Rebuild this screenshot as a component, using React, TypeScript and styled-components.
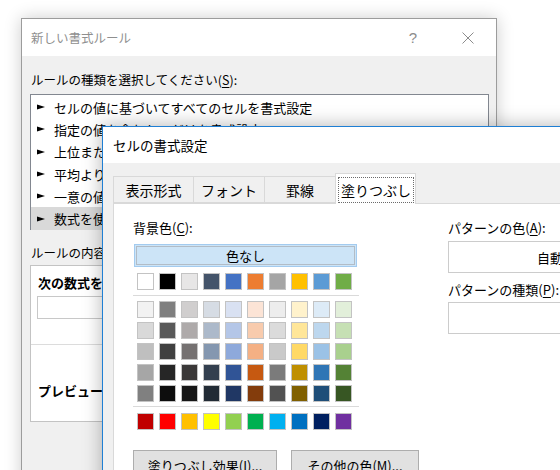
import React from "react";
import styled, { createGlobalStyle } from "styled-components";

const GlobalStyle = createGlobalStyle`
  html, body { margin: 0; padding: 0; background: #ffffff; }
  body { font-family: "Noto Sans CJK JP", "Noto Sans", sans-serif; color: #000; }
  * { box-sizing: border-box; }
`;

const Desktop = styled.div`
  position: relative;
  width: 560px;
  height: 470px;
  overflow: hidden;
  background: #ffffff;
`;

/* ---------- Back dialog: 新しい書式ルール ---------- */

const BackWindow = styled.section`
  position: absolute;
  left: 21px;
  top: 18px;
  width: 476px;
  height: 520px;
  border: 1px solid #9c9c9c;
  background: #f0f0f0;
  box-shadow: 0 0 16px rgba(0, 0, 0, 0.2);
  display: flex;
  flex-direction: column;
`;

const TitleBar = styled.header<{ $h: number; $pl: number }>`
  flex-shrink: 0;
  height: ${(p) => p.$h}px;
  padding-left: ${(p) => p.$pl}px;
  background: #ffffff;
  display: flex;
  align-items: center;
`;

const TitleText = styled.span<{ $size: number; $color: string }>`
  flex: 1;
  font-size: ${(p) => p.$size}px;
  line-height: 18px;
  color: ${(p) => p.$color};
  white-space: nowrap;
`;

const CaptionButton = styled.div<{ $w: number }>`
  width: ${(p) => p.$w}px;
  height: 100%;
  display: flex;
  align-items: center;
  justify-content: center;
  color: #8c8c8c;
  font-family: "Liberation Sans", "DejaVu Sans", sans-serif;
  font-size: 15px;
`;

const BackBody = styled.div`
  padding: 15px 7px 0 8px;
  display: flex;
  flex-direction: column;
`;

const FieldLabel = styled.div<{ $mt?: number; $size?: number; $bold?: boolean }>`
  margin-top: ${(p) => p.$mt ?? 0}px;
  padding-left: 1px;
  font-size: ${(p) => p.$size ?? 12.5}px;
  font-weight: ${(p) => (p.$bold ? 700 : 400)};
  line-height: 18px;
  white-space: nowrap;
  u { text-decoration: underline; text-underline-offset: 2px; }
`;

const RuleList = styled.ul`
  list-style: none;
  margin: 5px 0 0 0;
  padding: 1px 0;
  width: 459px;
  height: 136px;
  border: 1px solid #828790;
  background: #ffffff;
`;

const RuleItem = styled.li<{ $selected?: boolean }>`
  height: 22.3px;
  display: flex;
  align-items: center;
  gap: 9px;
  padding-left: 6px;
  font-size: 13px;
  white-space: nowrap;
  background: ${(p) => (p.$selected ? "#d9d9d9" : "transparent")};
`;

const RuleBox = styled.div`
  margin-top: 3px;
  width: 459px;
  height: 157px;
  border: 1px solid #c3c3c3;
  background: #ffffff;
  display: flex;
  flex-direction: column;
`;

const RuleBoxSection = styled.div<{ $h: number; $pt: number }>`
  height: ${(p) => p.$h}px;
  padding: ${(p) => p.$pt}px 0 0 6px;
  & + & { border-top: 1px solid #dcdcdc; }
`;

const FormulaInput = styled.div`
  margin-top: 4px;
  width: 440px;
  height: 23px;
  border: 1px solid #c8c8c8;
  background: #ffffff;
`;

/* ---------- Front dialog: セルの書式設定 ---------- */

const FrontWindow = styled.section`
  position: absolute;
  left: 102px;
  top: 126px;
  width: 520px;
  height: 400px;
  border: 1px solid #1f7fd4;
  background: #f0f0f0;
  box-shadow: 0 0 18px rgba(0, 0, 0, 0.3);
  display: flex;
  flex-direction: column;
`;

const FrontBody = styled.div`
  flex: 1;
  padding: 10px 0 0 10px;
  display: flex;
  flex-direction: column;
`;

const TabStrip = styled.div`
  height: 30px;
  display: flex;
  align-items: flex-end;
  position: relative;
  z-index: 1;
`;

const Tab = styled.div<{ $w: number; $active?: boolean }>`
  width: ${(p) => p.$w}px;
  height: ${(p) => (p.$active ? 31 : 27)}px;
  margin-bottom: ${(p) => (p.$active ? -1 : 0)}px;
  margin-left: -1px;
  border: 1px solid #d9d9d9;
  border-bottom: ${(p) => (p.$active ? "none" : "1px solid #d9d9d9")};
  background: ${(p) => (p.$active ? "#ffffff" : "#f0f0f0")};
  padding: ${(p) => (p.$active ? "3px 1px 1px 2px" : "0")};
  display: flex;
  align-items: stretch;
  justify-content: center;
  font-size: 14px;
  white-space: nowrap;
  &:first-child { margin-left: 0; }
`;

const TabLabel = styled.span<{ $focus?: boolean }>`
  flex: 1;
  display: flex;
  align-items: center;
  justify-content: center;
  padding-bottom: ${(p) => (p.$focus ? 1 : 0)}px;
  border: ${(p) => (p.$focus ? "1px dotted #6b6b6b" : "none")};
`;

const TabPanel = styled.div`
  flex: 1;
  border: 1px solid #d9d9d9;
  background: #ffffff;
  padding: 15px 0 0 19px;
  display: flex;
`;

const LeftColumn = styled.div`
  width: 227px;
  flex-shrink: 0;
  display: flex;
  flex-direction: column;
`;

const RightColumn = styled.div`
  margin-left: 88px;
  flex-shrink: 0;
  display: flex;
  flex-direction: column;
`;

const PanelLabel = styled.div<{ $mt?: number }>`
  margin-top: ${(p) => p.$mt ?? 0}px;
  font-size: 13px;
  line-height: 18px;
  white-space: nowrap;
  u { text-decoration: underline; text-underline-offset: 2px; }
`;

const NoColorButton = styled.div`
  margin: 7px 0 0 1px;
  width: 223px;
  height: 23px;
  background: #cce4f7;
  border: 1px solid #a3cbef;
  box-shadow: inset 0 0 0 1px #cce4f7, inset 0 0 0 2px #b2bcc6;
  display: flex;
  align-items: center;
  justify-content: center;
  font-size: 13px;
`;

const SwatchRow = styled.div<{ $mt: number }>`
  margin-top: ${(p) => p.$mt}px;
  padding-left: 4px;
  display: flex;
  gap: 5px;
`;

const SwatchGrid = styled.div`
  margin-top: 5px;
  padding-left: 4px;
  display: grid;
  grid-template-columns: repeat(10, 17px);
  column-gap: 5px;
  row-gap: 4px;
`;

const Swatch = styled.div<{ $c: string }>`
  width: 17px;
  height: 17px;
  background: ${(p) => p.$c};
  border: 1px solid #c3c3c3;
`;

const Divider = styled.div<{ $mt: number }>`
  margin-top: ${(p) => p.$mt}px;
  width: 226px;
  height: 1px;
  background: #dadada;
`;

const ButtonRow = styled.div`
  margin-top: 20px;
  display: flex;
  gap: 14px;
  width: max-content;
`;

const PushButton = styled.div<{ $w: number }>`
  flex-shrink: 0;
  width: ${(p) => p.$w}px;
  height: 30px;
  background: #e1e1e1;
  border: 1px solid #adadad;
  display: flex;
  align-items: center;
  justify-content: center;
  font-size: 13px;
  white-space: nowrap;
  u { text-decoration: underline; text-underline-offset: 2px; }
`;

const ComboBox = styled.div<{ $mt: number }>`
  margin-top: ${(p) => p.$mt}px;
  width: 204px;
  height: 32px;
  border: 1px solid #cccccc;
  background: #ffffff;
  display: flex;
  align-items: center;
  justify-content: center;
  font-size: 13px;
`;

/* ---------- data ---------- */

const themeRow = ["#FFFFFF", "#000000", "#E7E6E6", "#44546A", "#4472C4", "#ED7D31", "#A5A5A5", "#FFC000", "#5B9BD5", "#70AD47"];

const shadeRows = [
  ["#F2F2F2", "#7F7F7F", "#D0CECE", "#D6DCE4", "#D9E1F2", "#FCE4D6", "#EDEDED", "#FFF2CC", "#DDEBF7", "#E2EFDA"],
  ["#D9D9D9", "#595959", "#AEAAAA", "#ACB9CA", "#B4C6E7", "#F8CBAD", "#DBDBDB", "#FFE699", "#BDD7EE", "#C6E0B4"],
  ["#BFBFBF", "#404040", "#757171", "#8497B0", "#8EA9DB", "#F4B084", "#C9C9C9", "#FFD966", "#9BC2E6", "#A9D08E"],
  ["#A6A6A6", "#262626", "#3A3838", "#333F4F", "#305496", "#C65911", "#7B7B7B", "#BF8F00", "#2F75B5", "#548235"],
  ["#808080", "#0D0D0D", "#161616", "#222B35", "#203764", "#833C0C", "#525252", "#806000", "#1F4E78", "#375623"],
];

const standardRow = ["#C00000", "#FF0000", "#FFC000", "#FFFF00", "#92D050", "#00B050", "#00B0F0", "#0070C0", "#002060", "#7030A0"];

const rules = [
  "セルの値に基づいてすべてのセルを書式設定",
  "指定の値を含むセルだけを書式設定",
  "上位または下位に入る値だけを書式設定",
  "平均より上または下の値だけを書式設定",
  "一意の値または重複する値だけを書式設定",
  "数式を使用して、書式設定するセルを決定",
];

const tabs = [
  { label: "表示形式", w: 81 },
  { label: "フォント", w: 72 },
  { label: "罫線", w: 72 },
  { label: "塗りつぶし", w: 81, active: true },
];

const Arrow = () => (
  <svg width="8" height="6" viewBox="0 0 8 6">
    <polygon points="0,0.5 8,3 0,5.5" fill="#000" />
  </svg>
);

const CloseIcon = () => (
  <svg width="12" height="12" viewBox="0 0 12 12">
    <path d="M0.5 0.5 L11.5 11.5 M11.5 0.5 L0.5 11.5" stroke="#8c8c8c" strokeWidth="1" fill="none" />
  </svg>
);

export default function App() {
  return (
    <>
      <GlobalStyle />
      <Desktop>
        <BackWindow>
          <TitleBar $h={37} $pl={9}>
            <TitleText $size={12.5} $color="#8f8f8f">新しい書式ルール</TitleText>
            <CaptionButton $w={54}>?</CaptionButton>
            <CaptionButton $w={56}>
              <CloseIcon />
            </CaptionButton>
          </TitleBar>
          <BackBody>
            <FieldLabel>
              ルールの種類を選択してください(<u>S</u>):
            </FieldLabel>
            <RuleList>
              {rules.map((r, i) => (
                <RuleItem key={r} $selected={i === rules.length - 1}>
                  <Arrow />
                  {r}
                </RuleItem>
              ))}
            </RuleList>
            <FieldLabel $mt={14}>
              ルールの内容を編集してください(<u>E</u>):
            </FieldLabel>
            <RuleBox>
              <RuleBoxSection $h={78} $pt={8}>
                <FieldLabel $size={13} $bold>
                  次の数式を満たす場合に値を書式設定(<u>O</u>):
                </FieldLabel>
                <FormulaInput />
              </RuleBoxSection>
              <RuleBoxSection $h={77} $pt={37}>
                <FieldLabel $size={13} $bold>
                  プレビュー:
                </FieldLabel>
              </RuleBoxSection>
            </RuleBox>
          </BackBody>
        </BackWindow>

        <FrontWindow>
          <TitleBar $h={36} $pl={10}>
            <TitleText $size={13.5} $color="#000000">セルの書式設定</TitleText>
          </TitleBar>
          <FrontBody>
            <TabStrip>
              {tabs.map((t) => (
                <Tab key={t.label} $w={t.w} $active={t.active}>
                  <TabLabel $focus={t.active}>{t.label}</TabLabel>
                </Tab>
              ))}
            </TabStrip>
            <TabPanel>
              <LeftColumn>
                <PanelLabel>
                  背景色(<u>C</u>):
                </PanelLabel>
                <NoColorButton>色なし</NoColorButton>
                <SwatchRow $mt={6}>
                  {themeRow.map((c, i) => (
                    <Swatch key={i} $c={c} />
                  ))}
                </SwatchRow>
                <Divider $mt={5} />
                <SwatchGrid>
                  {shadeRows.flat().map((c, i) => (
                    <Swatch key={i} $c={c} />
                  ))}
                </SwatchGrid>
                <Divider $mt={4} />
                <SwatchRow $mt={6}>
                  {standardRow.map((c, i) => (
                    <Swatch key={i} $c={c} />
                  ))}
                </SwatchRow>
                <ButtonRow>
                  <PushButton $w={144}>
                    塗りつぶし効果(<u>I</u>)...
                  </PushButton>
                  <PushButton $w={128}>
                    その他の色(<u>M</u>)...
                  </PushButton>
                </ButtonRow>
              </LeftColumn>
              <RightColumn>
                <PanelLabel>
                  パターンの色(<u>A</u>):
                </PanelLabel>
                <ComboBox $mt={4}>自動</ComboBox>
                <PanelLabel $mt={8}>
                  パターンの種類(<u>P</u>):
                </PanelLabel>
                <ComboBox $mt={3} />
              </RightColumn>
            </TabPanel>
          </FrontBody>
        </FrontWindow>
      </Desktop>
    </>
  );
}
